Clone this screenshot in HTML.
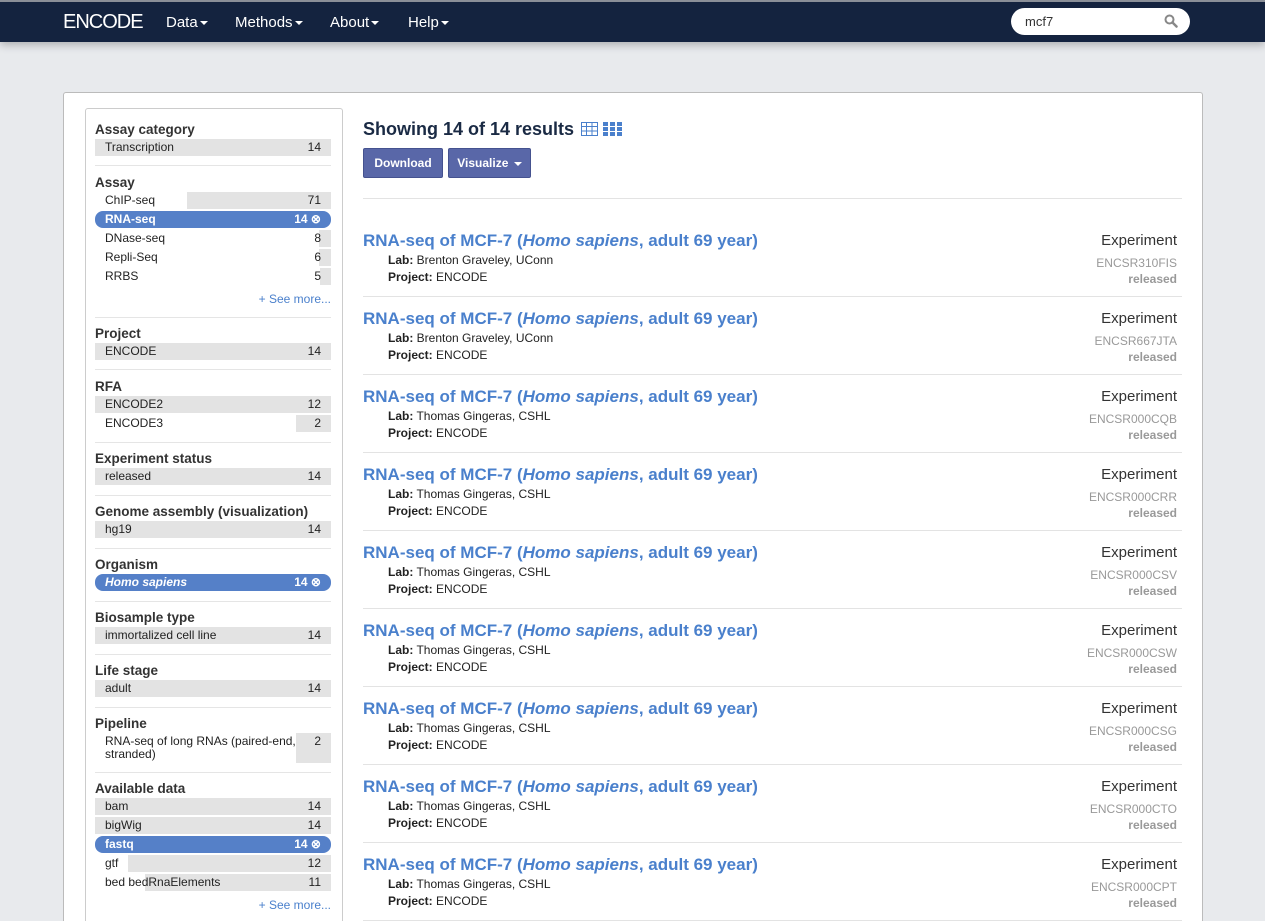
<!DOCTYPE html>
<html style="height:921px;overflow:hidden"><head><meta charset="utf-8"><style>
*{margin:0;padding:0;box-sizing:border-box}
body{width:1265px;height:921px;overflow:hidden;background:#e8eaed;font-family:"Liberation Sans",Arial,sans-serif;position:relative;color:#222}
.a{position:absolute}
.nav{left:0;top:0;width:1265px;height:42px;background:#14233f;border-top:2px solid #8a8f98;box-shadow:0 3px 8px rgba(0,0,0,.25)}
.nav span{position:absolute;top:12px;color:#fff;font-size:15px}
.car{display:inline-block;border-top:4px solid #fff;border-left:4px solid transparent;border-right:4px solid transparent;vertical-align:middle;margin-left:2px}
.panel{left:63px;top:92px;width:1140px;height:829px;background:#fff;border:1px solid #bbb;border-bottom:none;border-radius:3px 3px 0 0}
.fbox{left:85px;top:108px;width:258px;height:813px;border:1px solid #ccc;border-bottom:none;border-radius:3px 3px 0 0;background:#fff}
.ft,.fr,.sep,.more{margin-top:1px}
.ft{position:absolute;left:95px;font-weight:bold;font-size:13.5px;color:#333}
.fr{position:absolute;left:95px;width:236px;height:17px;font-size:12px;line-height:17px;color:#222}
.fr .bar{position:absolute;right:0;top:0;bottom:0;background:#e3e3e3}
.fr .l{position:absolute;left:10px;top:0}
.fr .n{position:absolute;right:10px;top:0}
.fr.sel{background:#5580c8;border-radius:8px;color:#fff;font-weight:bold}
.sep{position:absolute;left:95px;width:236px;height:1px;background:#e5e5e5}
.more{position:absolute;right:934px;font-size:12px;color:#4a80cc}
.res{position:absolute;left:363px;width:819px;height:78px;border-bottom:1px solid #e3e3e3}
.res .t{position:absolute;left:0;top:12px;font-size:17px;font-weight:bold;color:#4a80cc}
.res .m{position:absolute;left:25px;font-size:12px;color:#222}
.res .e{position:absolute;right:5px;top:13px;font-size:15px;color:#333}
.res .id{position:absolute;right:5px;top:37px;font-size:12px;color:#999}
.res .s{position:absolute;right:5px;top:53px;font-size:12px;color:#999;font-weight:bold}
.btn{position:absolute;top:148px;height:30px;background:#5967a8;border:1px solid #45528f;border-radius:2px;color:#fff;font-weight:bold;font-size:12px;line-height:28px;text-align:center}
</style></head><body>
<div class="a nav">
<span style="left:63px;top:9px;font-size:20px;letter-spacing:-1px">ENCODE</span>
<span style="left:166px">Data<i class="car"></i></span>
<span style="left:235px">Methods<i class="car"></i></span>
<span style="left:330px">About<i class="car"></i></span>
<span style="left:408px">Help<i class="car"></i></span>
<div class="a" style="left:1011px;top:6px;width:179px;height:27px;background:#fff;border-radius:14px;font-size:13px;color:#333;padding:6px 0 0 14px">mcf7
<svg class="a" style="left:153px;top:6px" width="14" height="14" viewBox="0 0 14 14"><circle cx="5.5" cy="5.5" r="4" fill="none" stroke="#888" stroke-width="2"/><path d="M8.5 8.5L12.5 12.5" stroke="#888" stroke-width="2.5" stroke-linecap="round"/></svg></div>
</div>
<div class="a panel"></div>
<div class="a fbox"></div>

<div class="ft" style="top:121px">Assay category</div>
<div class="fr" style="top:138px"><div class="bar" style="width:236px"></div><span class="l">Transcription</span><span class="n">14</span></div>
<div class="sep" style="top:164px"></div>
<div class="ft" style="top:174px">Assay</div>
<div class="fr" style="top:191px"><div class="bar" style="width:144px"></div><span class="l">ChIP-seq</span><span class="n">71</span></div>
<div class="fr sel" style="top:210px"><span class="l">RNA-seq</span><span class="n">14 ⊗</span></div>
<div class="fr" style="top:229px"><div class="bar" style="width:12px"></div><span class="l">DNase-seq</span><span class="n">8</span></div>
<div class="fr" style="top:248px"><div class="bar" style="width:12px"></div><span class="l">Repli-Seq</span><span class="n">6</span></div>
<div class="fr" style="top:267px"><div class="bar" style="width:11px"></div><span class="l">RRBS</span><span class="n">5</span></div>
<div class="more" style="top:291px">+ See more...</div>
<div class="sep" style="top:316px"></div>
<div class="ft" style="top:325px">Project</div>
<div class="fr" style="top:342px"><div class="bar" style="width:236px"></div><span class="l">ENCODE</span><span class="n">14</span></div>
<div class="sep" style="top:368px"></div>
<div class="ft" style="top:378px">RFA</div>
<div class="fr" style="top:395px"><div class="bar" style="width:236px"></div><span class="l">ENCODE2</span><span class="n">12</span></div>
<div class="fr" style="top:414px"><div class="bar" style="width:35px"></div><span class="l">ENCODE3</span><span class="n">2</span></div>
<div class="sep" style="top:441px"></div>
<div class="ft" style="top:450px">Experiment status</div>
<div class="fr" style="top:467px"><div class="bar" style="width:236px"></div><span class="l">released</span><span class="n">14</span></div>
<div class="sep" style="top:494px"></div>
<div class="ft" style="top:503px">Genome assembly (visualization)</div>
<div class="fr" style="top:520px"><div class="bar" style="width:236px"></div><span class="l">hg19</span><span class="n">14</span></div>
<div class="sep" style="top:547px"></div>
<div class="ft" style="top:556px">Organism</div>
<div class="fr sel" style="top:573px"><span class="l"><i>Homo sapiens</i></span><span class="n">14 ⊗</span></div>
<div class="sep" style="top:600px"></div>
<div class="ft" style="top:609px">Biosample type</div>
<div class="fr" style="top:626px"><div class="bar" style="width:236px"></div><span class="l">immortalized cell line</span><span class="n">14</span></div>
<div class="sep" style="top:653px"></div>
<div class="ft" style="top:662px">Life stage</div>
<div class="fr" style="top:679px"><div class="bar" style="width:236px"></div><span class="l">adult</span><span class="n">14</span></div>
<div class="sep" style="top:706px"></div>
<div class="ft" style="top:715px">Pipeline</div>
<div class="fr" style="top:732px;height:30px"><div class="bar" style="width:35px"></div><span class="l" style="line-height:13px;top:2px">RNA-seq of long RNAs (paired-end,<br>stranded)</span><span class="n">2</span></div>
<div class="sep" style="top:771px"></div>
<div class="ft" style="top:780px">Available data</div>
<div class="fr" style="top:797px"><div class="bar" style="width:236px"></div><span class="l">bam</span><span class="n">14</span></div>
<div class="fr" style="top:816px"><div class="bar" style="width:236px"></div><span class="l">bigWig</span><span class="n">14</span></div>
<div class="fr sel" style="top:835px"><span class="l">fastq</span><span class="n">14 ⊗</span></div>
<div class="fr" style="top:854px"><div class="bar" style="width:203px"></div><span class="l">gtf</span><span class="n">12</span></div>
<div class="fr" style="top:873px"><div class="bar" style="width:186px"></div><span class="l">bed bedRnaElements</span><span class="n">11</span></div>
<div class="more" style="top:897px">+ See more...</div>

<div class="a" style="left:363px;top:119px;font-size:18px;font-weight:bold;color:#1a2a44">Showing 14 of 14 results
<svg style="vertical-align:-1px;margin-left:2px" width="17" height="14" viewBox="0 0 17 14"><rect x="0.5" y="0.5" width="16" height="13" fill="none" stroke="#4a80cc"/><path d="M0 4.5H17M0 9H17M5.5 0V14M11 0V14" stroke="#4a80cc"/></svg>
<svg style="vertical-align:-1px" width="20" height="14" viewBox="0 0 20 14"><g fill="#4a80cc"><rect x="0" y="0" width="5" height="4"/><rect x="7" y="0" width="5" height="4"/><rect x="14" y="0" width="5" height="4"/><rect x="0" y="5" width="5" height="4"/><rect x="7" y="5" width="5" height="4"/><rect x="14" y="5" width="5" height="4"/><rect x="0" y="10" width="5" height="4"/><rect x="7" y="10" width="5" height="4"/><rect x="14" y="10" width="5" height="4"/></g></svg></div>
<div class="btn" style="left:363px;width:80px">Download</div>
<div class="btn" style="left:448px;width:83px">Visualize <i class="car"></i></div>
<div class="a" style="left:363px;top:198px;width:819px;height:1px;background:#e3e3e3"></div>

<div class="res" style="top:219px"><div class="t">RNA-seq of MCF-7 (<i>Homo sapiens</i>, adult 69 year)</div><div class="m" style="top:34px"><b>Lab:</b> Brenton Graveley, UConn</div><div class="m" style="top:51px"><b>Project:</b> ENCODE</div><div class="e">Experiment</div><div class="id">ENCSR310FIS</div><div class="s">released</div></div>
<div class="res" style="top:297px"><div class="t">RNA-seq of MCF-7 (<i>Homo sapiens</i>, adult 69 year)</div><div class="m" style="top:34px"><b>Lab:</b> Brenton Graveley, UConn</div><div class="m" style="top:51px"><b>Project:</b> ENCODE</div><div class="e">Experiment</div><div class="id">ENCSR667JTA</div><div class="s">released</div></div>
<div class="res" style="top:375px"><div class="t">RNA-seq of MCF-7 (<i>Homo sapiens</i>, adult 69 year)</div><div class="m" style="top:34px"><b>Lab:</b> Thomas Gingeras, CSHL</div><div class="m" style="top:51px"><b>Project:</b> ENCODE</div><div class="e">Experiment</div><div class="id">ENCSR000CQB</div><div class="s">released</div></div>
<div class="res" style="top:453px"><div class="t">RNA-seq of MCF-7 (<i>Homo sapiens</i>, adult 69 year)</div><div class="m" style="top:34px"><b>Lab:</b> Thomas Gingeras, CSHL</div><div class="m" style="top:51px"><b>Project:</b> ENCODE</div><div class="e">Experiment</div><div class="id">ENCSR000CRR</div><div class="s">released</div></div>
<div class="res" style="top:531px"><div class="t">RNA-seq of MCF-7 (<i>Homo sapiens</i>, adult 69 year)</div><div class="m" style="top:34px"><b>Lab:</b> Thomas Gingeras, CSHL</div><div class="m" style="top:51px"><b>Project:</b> ENCODE</div><div class="e">Experiment</div><div class="id">ENCSR000CSV</div><div class="s">released</div></div>
<div class="res" style="top:609px"><div class="t">RNA-seq of MCF-7 (<i>Homo sapiens</i>, adult 69 year)</div><div class="m" style="top:34px"><b>Lab:</b> Thomas Gingeras, CSHL</div><div class="m" style="top:51px"><b>Project:</b> ENCODE</div><div class="e">Experiment</div><div class="id">ENCSR000CSW</div><div class="s">released</div></div>
<div class="res" style="top:687px"><div class="t">RNA-seq of MCF-7 (<i>Homo sapiens</i>, adult 69 year)</div><div class="m" style="top:34px"><b>Lab:</b> Thomas Gingeras, CSHL</div><div class="m" style="top:51px"><b>Project:</b> ENCODE</div><div class="e">Experiment</div><div class="id">ENCSR000CSG</div><div class="s">released</div></div>
<div class="res" style="top:765px"><div class="t">RNA-seq of MCF-7 (<i>Homo sapiens</i>, adult 69 year)</div><div class="m" style="top:34px"><b>Lab:</b> Thomas Gingeras, CSHL</div><div class="m" style="top:51px"><b>Project:</b> ENCODE</div><div class="e">Experiment</div><div class="id">ENCSR000CTO</div><div class="s">released</div></div>
<div class="res" style="top:843px"><div class="t">RNA-seq of MCF-7 (<i>Homo sapiens</i>, adult 69 year)</div><div class="m" style="top:34px"><b>Lab:</b> Thomas Gingeras, CSHL</div><div class="m" style="top:51px"><b>Project:</b> ENCODE</div><div class="e">Experiment</div><div class="id">ENCSR000CPT</div><div class="s">released</div></div>
</body></html>
